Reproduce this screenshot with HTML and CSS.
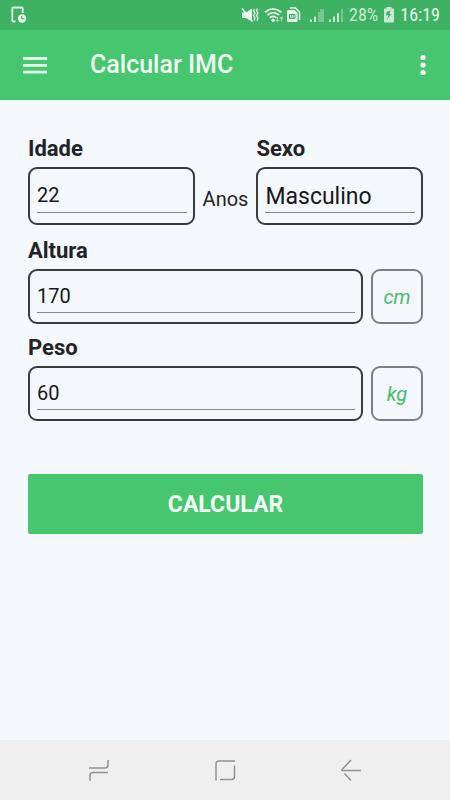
FILE: index.html
```html
<!DOCTYPE html>
<html lang="pt-BR">
<head>
<meta charset="utf-8">
<meta name="viewport" content="width=device-width, initial-scale=1">
<title>Calcular IMC</title>
<link rel="stylesheet" href="styles.css">
</head>
<body>
<div class="status">
  <svg class="status-left" width="18" height="18" viewBox="0 0 18 18" fill="none" stroke="#e6f7eb" stroke-width="1.8">
    <path d="M5.500 15.500H3.400Q2.300 15.500 2.300 14.500V2.500Q2.300 1.500 3.400 1.500H11.500Q12.700 1.500 12.700 2.500V7"/>
    <circle cx="12" cy="12.500" r="4.200" fill="#e6f7eb" stroke="none"/>
    <path d="M11.700 10V12.700H13.800" stroke="#3fb162" stroke-width="1.1"/>
  </svg>
  <svg width="18" height="18" viewBox="0 0 18 18">
    <path d="M1 6.500H5L11 2.500V15.500L5 12H1Z" fill="#e6f7eb"/>
    <path d="M1 2.500L11.500 15.500" stroke="#e6f7eb" stroke-width="1.600"/>
    <path d="M13.500 3L12.500 5L14 7L12.500 9.500L14 12L13 14.500M16.500 2.500L15.500 5L17 7L15.500 9.500L17 12L16 15" fill="none" stroke="#e6f7eb" stroke-width="1.300"/>
  </svg>
  <svg class="wifi" width="21" height="18" viewBox="0 0 21 18" fill="none">
    <path d="M1 6.300Q9 -0.500 17.500 6.300M3.500 9Q9 4.300 15 9M6 11.700Q9 9.200 12.500 11.700" stroke="#e6f7eb" stroke-width="1.800"/>
    <circle cx="9.200" cy="14.300" r="1.700" fill="#e6f7eb"/>
    <path d="M13.500 11V15.500M12 14L13.500 15.500L15 14M17.500 15.500V11M16 12.500L17.500 11L19 12.500" stroke="#a0dab2" stroke-width="1.100"/>
  </svg>
  <svg width="16" height="18" viewBox="0 0 16 18" fill="none">
    <path d="M4 2H9.500L13.500 6V14" stroke="#e6f7eb" stroke-width="1.500"/>
    <path d="M1 5Q1 4 2 4H8.500L11.500 7V15Q11.500 16 10.500 16H2Q1 16 1 15Z" fill="#e6f7eb"/>
    <path d="M3.500 8.500H9V12.500H3.500ZM5.300 8.500V12.500M7.300 8.500V12.500" stroke="#3fb162" stroke-width="1"/>
  </svg>
  <svg class="signal wide" width="16" height="18" viewBox="0 0 16 18">
    <path d="M1 13.500H3V16H1ZM5 10.500H7V16H5Z" fill="#c5e9d0"/>
    <path d="M9 6H11V16H9ZM11 3H15V16H11Z" fill="#78c690"/>
  </svg>
  <svg class="signal" width="16" height="18" viewBox="0 0 16 18">
    <path d="M1 13.500H3V16H1ZM5 10.500H7V16H5ZM9 7H11V16H9Z" fill="#c5e9d0"/>
    <path d="M13 3H15V16H13Z" fill="#78c690"/>
  </svg>
  <span class="battery-level">28%</span>
  <svg width="12" height="18" viewBox="0 0 12 18">
    <path d="M3.500 1H8.500V2.500H10Q11 2.500 11 3.500V15.500Q11 16.500 10 16.500H2Q1 16.500 1 15.500V3.500Q1 2.500 2 2.500H3.500Z" fill="#c9ebd3"/>
    <path d="M7.500 4.500L3.500 6L3.200 9.500L5.500 9L4 13.500L8.500 8L6.300 8.200Z" fill="#3fb162"/>
  </svg>
  <span class="clock">16:19</span>
</div>
<header class="appbar">
  <button class="icon-button" type="button" aria-label="Menu">
    <svg width="24" height="18" viewBox="0 0 24 18" stroke="#e3f9e9" stroke-width="2.800"><path d="M0 2.500H24M0 9.300H24M0 16.100H24"/></svg>
  </button>
  <h1>Calcular IMC</h1>
  <button class="icon-button more" type="button" aria-label="Mais">
    <svg width="6" height="22" viewBox="0 0 6 22" fill="#fff"><circle cx="3" cy="3.500" r="2.600"/><circle cx="3" cy="11" r="2.600"/><circle cx="3" cy="18.500" r="2.600"/></svg>
  </button>
</header>
<main>
  <form class="form">
    <div class="row top">
      <div class="field">
        <label for="idade">Idade</label>
        <div class="box tall"><input id="idade" type="text" inputmode="numeric" value="22"></div>
      </div>
      <span class="years">Anos</span>
      <div class="field">
        <label for="sexo">Sexo</label>
        <div class="box tall">
          <select id="sexo"><option selected>Masculino</option><option>Feminino</option></select>
        </div>
      </div>
    </div>
    <div class="field">
      <label for="altura">Altura</label>
      <div class="row">
        <div class="box"><input id="altura" type="text" inputmode="numeric" value="170"></div>
        <span class="unit">cm</span>
      </div>
    </div>
    <div class="field">
      <label for="peso">Peso</label>
      <div class="row">
        <div class="box"><input id="peso" type="text" inputmode="numeric" value="60"></div>
        <span class="unit">kg</span>
      </div>
    </div>
    <button class="submit" type="button">CALCULAR</button>
  </form>
</main>
<nav class="navbar">
  <button type="button" aria-label="Recentes">
    <svg width="22" height="24" viewBox="0 0 22 24"><path d="M1 10H17Q20 10 20 7V2M20 14.500H5Q2 14.500 2 17.500V23"/></svg>
  </button>
  <button type="button" aria-label="Início">
    <svg width="22" height="24" viewBox="0 0 22 24"><path d="M2 22.500V6Q2 3 5 3H21M20.500 7.500V18.500Q20.500 21.500 17.500 21.500H6"/></svg>
  </button>
  <button type="button" aria-label="Voltar">
    <svg width="22" height="24" viewBox="0 0 22 24"><path d="M11 2L2 11.500V12.500H21M4.500 15.500L11 22.500"/></svg>
  </button>
</nav>
</body>
</html>
```
FILE: styles.css
```css
* {
  box-sizing: border-box;
}

body {
  margin: 0;
  min-height: 100vh;
  display: flex;
  flex-direction: column;
  background: #f4f7fb;
  color: #212427;
  font-family: Roboto, "Liberation Sans", sans-serif;
}

button {
  border: 0;
  padding: 0;
  background: none;
  font: inherit;
}

svg {
  display: block;
}

.status {
  display: flex;
  align-items: center;
  height: 30px;
  padding: 0 10px;
  background: #3fb162;
  font-size: 18px;
}

.status-left {
  margin-right: auto;
}

.wifi {
  margin: 0 1px 0 5px;
}

.signal {
  margin-left: 3px;
}

.signal.wide {
  margin-left: 7px;
}

.battery-level,
.clock {
  font-family: "Roboto Condensed", Roboto, sans-serif;
  line-height: 32px;
}

.battery-level {
  margin: 0 5px;
  color: #c9ebd3;
}

.clock {
  margin-left: 5px;
  color: #e6f7eb;
}

.appbar {
  display: flex;
  align-items: center;
  height: 70px;
  padding: 0 16px;
  background: #46c66e;
}

.appbar h1 {
  flex: 1;
  margin: 0 0 0 36px;
  color: #effdf3;
  font-size: 25px;
  font-weight: 500;
  line-height: 32px;
}

.icon-button {
  display: grid;
  place-items: center;
  width: 38px;
  height: 40px;
}

.icon-button.more {
  width: 22px;
}

main {
  flex: 1;
}

.form {
  display: flex;
  flex-direction: column;
  gap: 11px;
  padding: 36px 27px 36px 28px;
}

.row {
  display: flex;
  gap: 8px;
}

.top {
  align-items: flex-end;
  margin-bottom: 2px;
}

.field {
  flex: 1;
}

.field label {
  display: block;
  margin-bottom: 5px;
  font-size: 22px;
  font-weight: 700;
  line-height: 26px;
}

.box {
  flex: 1;
  height: 55px;
  padding: 9px 6px 9px 7px;
  border: 2px solid #383b3f;
  border-radius: 9px;
}

.box.tall {
  height: 58px;
  padding-bottom: 10px;
}

.box input,
.box select {
  appearance: none;
  display: block;
  width: 100%;
  height: 100%;
  padding: 0;
  border: 0;
  border-bottom: 1px solid #85898d;
  border-radius: 0;
  outline: 0;
  background: none;
  color: #16181a;
  font: inherit;
  font-size: 20px;
}

.box select {
  padding-top: 2px;
  font-size: 23px;
}

.years {
  font-size: 20px;
  line-height: 24px;
  padding-bottom: 14px;
}

.unit {
  display: grid;
  place-items: center;
  width: 52px;
  height: 55px;
  border: 2px solid #7b7f83;
  border-radius: 9px;
  color: #46bd6b;
  font-size: 20px;
  font-style: italic;
}

.submit {
  height: 60px;
  margin-top: 42px;
  border-radius: 2px;
  background: #46c66e;
  color: #f4fff7;
  font-size: 23px;
  font-weight: 700;
}

.navbar {
  display: flex;
  justify-content: space-between;
  height: 60px;
  padding: 0 88px;
  background: #efefef;
}

.navbar svg {
  fill: none;
  stroke: #929292;
  stroke-width: 1.5;
}
```
